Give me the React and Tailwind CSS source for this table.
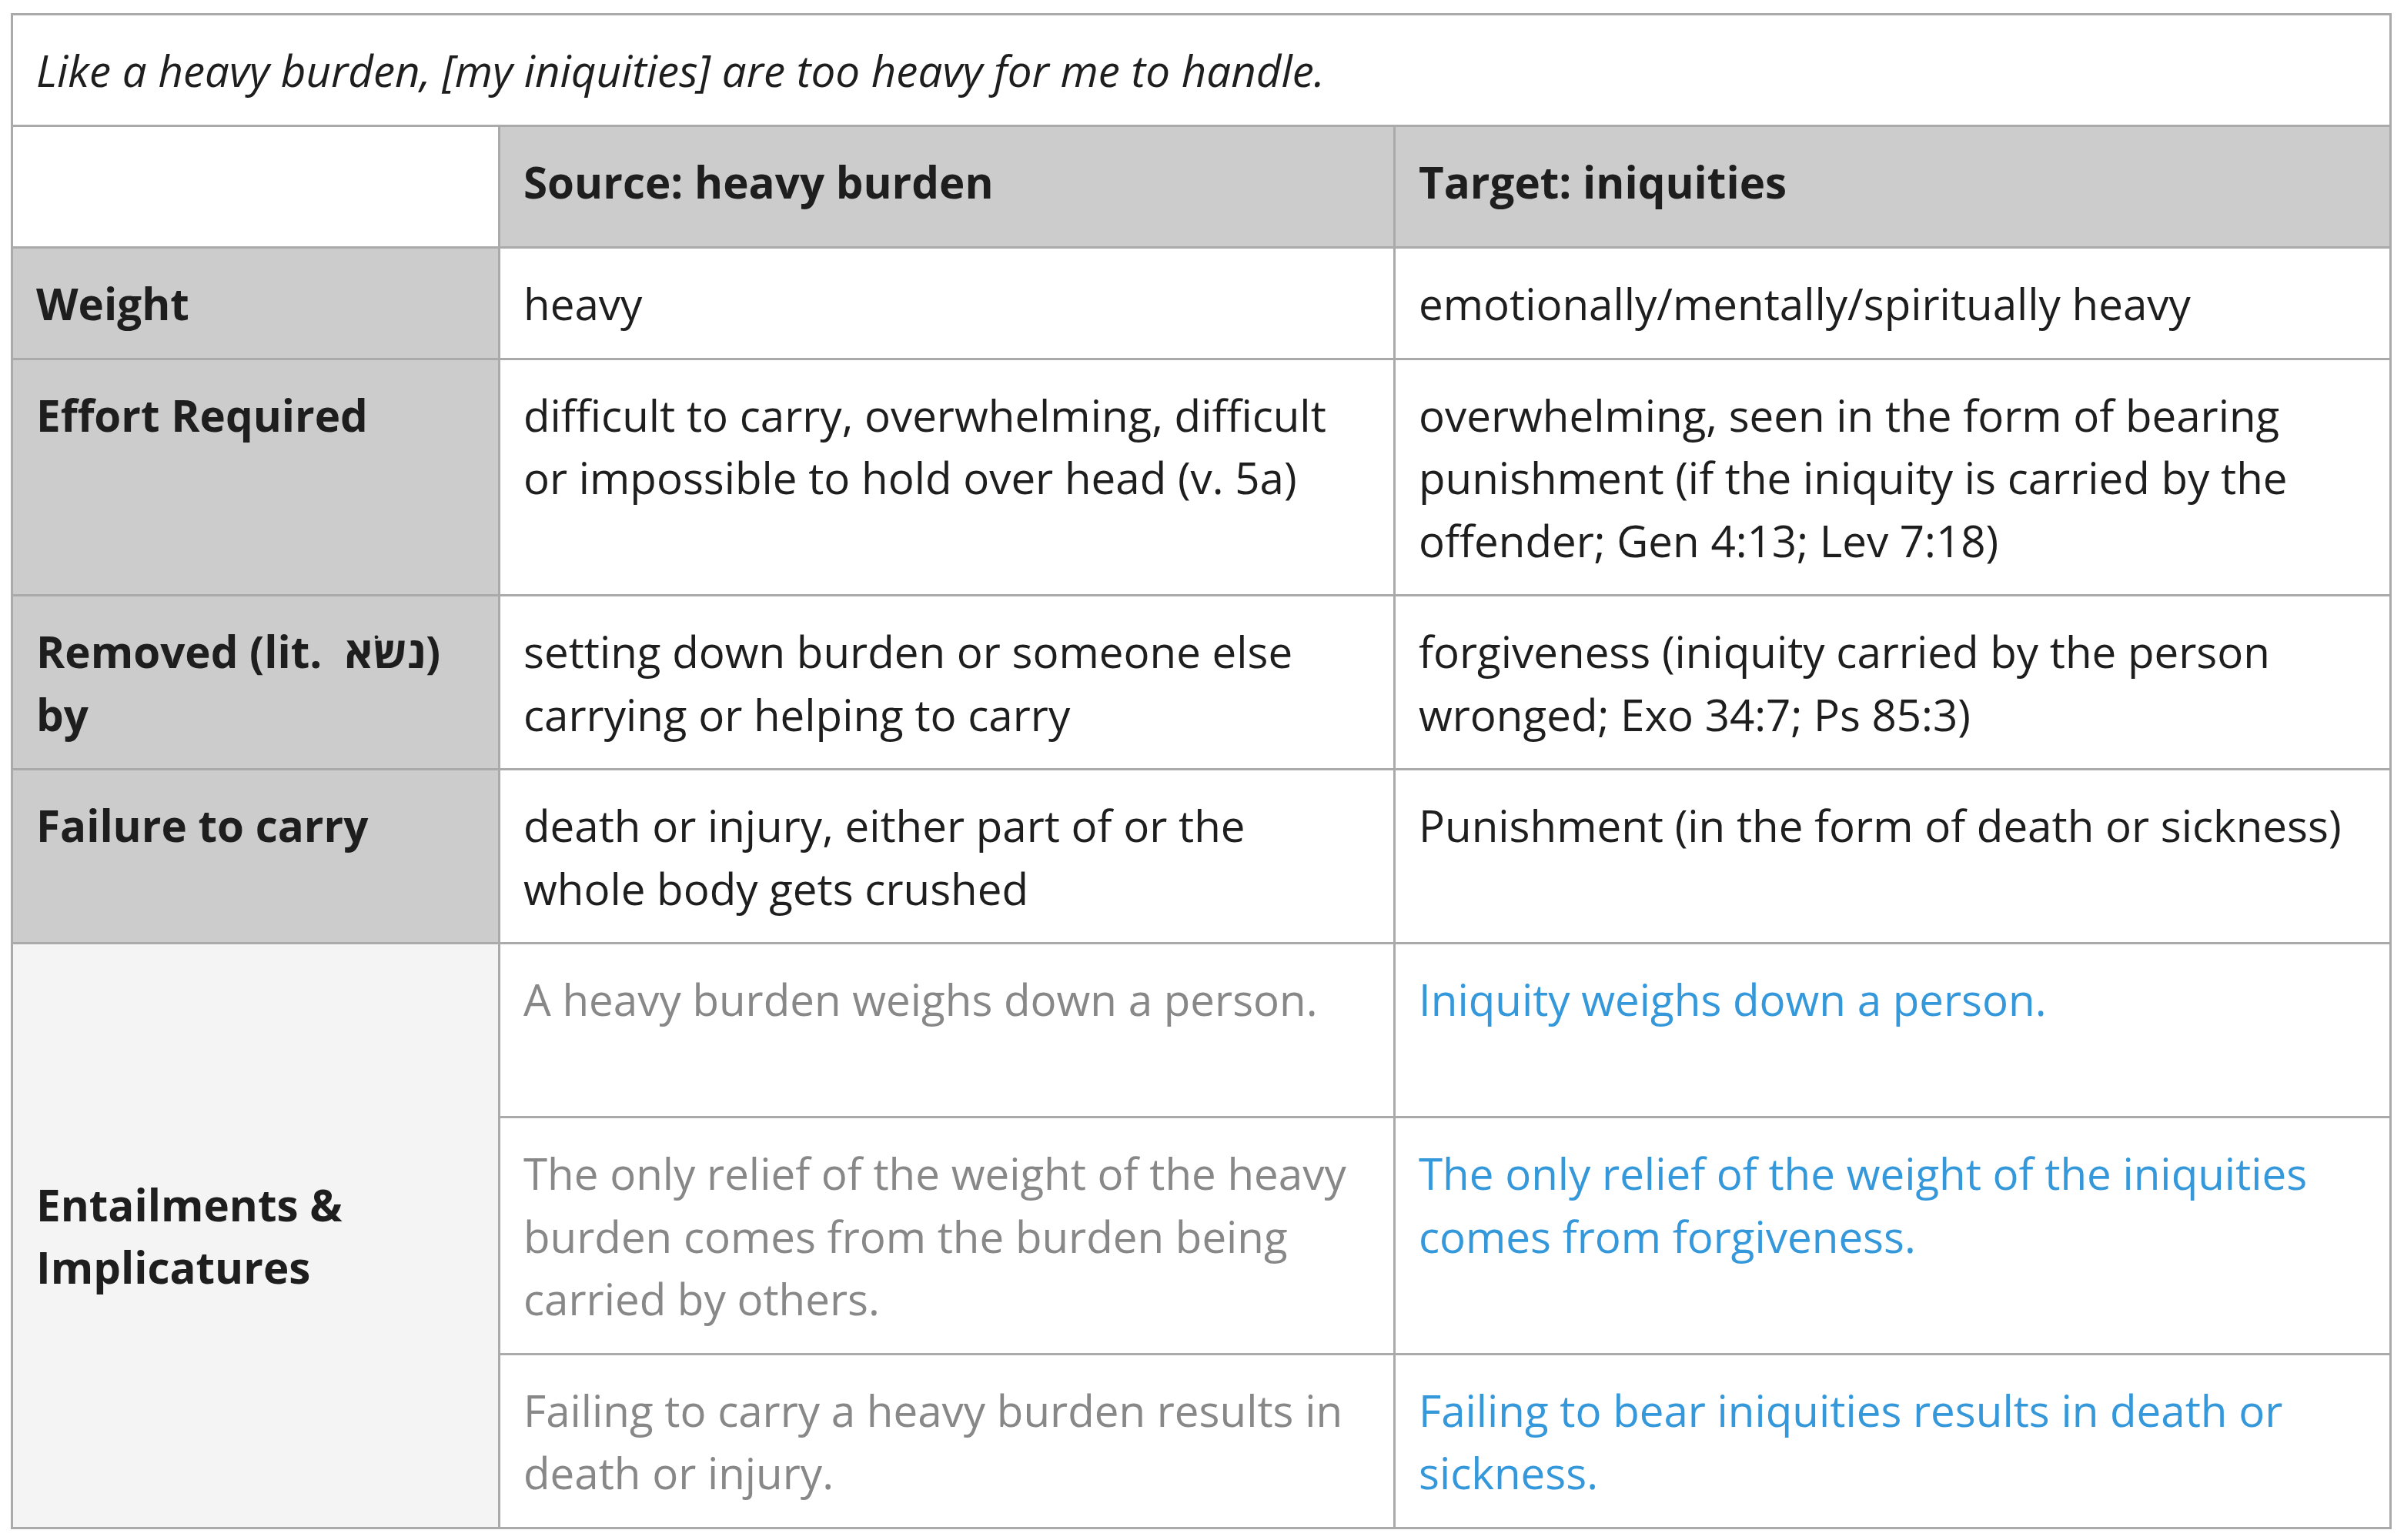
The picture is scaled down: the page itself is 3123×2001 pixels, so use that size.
import React from "react";

const cell = "border-r-[3px] border-b-[3px] border-[#aaaaaa] px-[30px] pt-[31px] pb-[29px]";
const label = `${cell} bg-[#cccccc] font-bold text-[#1e1e1e]`;
const body = `${cell} bg-white text-[#1e1e1e]`;
const gray = `${cell} bg-white text-[#888888]`;
const blue = `${cell} bg-white text-[#3498db]`;
const head = "border-r-[3px] border-b-[3px] border-[#aaaaaa] px-[30px] pt-[31px] pb-[43px]";

export default function App() {
  return (
    <div className="w-[3123px] h-[2001px] bg-white pt-[17px] pl-[14px]" style={{ fontFamily: '"Open Sans", "Noto Sans", "DejaVu Sans", sans-serif' }}>
      <div className="grid grid-cols-[633px_1163px_1294px] w-[3093px] border-l-[3px] border-t-[3px] border-[#aaaaaa] text-[56.5px] leading-[81.5px]">
        <div className={`${body} col-span-3 italic`}>
          Like a heavy burden, [my iniquities] are too heavy for me to handle.
        </div>

        <div className={`${head} bg-white`}></div>
        <div className={`${head} bg-[#cccccc] font-bold text-[#1e1e1e]`}>Source: heavy burden</div>
        <div className={`${head} bg-[#cccccc] font-bold text-[#1e1e1e]`}>Target: iniquities</div>

        <div className={label}>Weight</div>
        <div className={body}>heavy</div>
        <div className={body}>emotionally/mentally/spiritually heavy</div>

        <div className={label}>Effort Required</div>
        <div className={body}>difficult to carry, overwhelming, difficult or impossible to hold over head (v. 5a)</div>
        <div className={body}>overwhelming, seen in the form of bearing punishment (if the iniquity is carried by the offender; Gen 4:13; Lev 7:18)</div>

        <div className={label}>
          Removed (lit.&nbsp; <span dir="rtl">נשׂא</span>)<br />by
        </div>
        <div className={body}>setting down burden or someone else carrying or helping to carry</div>
        <div className={body}>forgiveness (iniquity carried by the person wronged; Exo 34:7; Ps 85:3)</div>

        <div className={label}>Failure to carry</div>
        <div className={body}>death or injury, either part of or the whole body gets crushed</div>
        <div className={body}>Punishment (in the form of death or sickness)</div>

        <div className={`${cell} row-span-3 bg-[#f4f4f4] font-bold text-[#1e1e1e] flex items-center`}>
          <div>Entailments &amp;<br />Implicatures</div>
        </div>
        <div className={`${gray} min-h-[226px]`}>A heavy burden weighs down a person.</div>
        <div className={`${blue} min-h-[226px]`}>Iniquity weighs down a person.</div>

        <div className={gray}>The only relief of the weight of the heavy burden comes from the burden being carried by others.</div>
        <div className={blue}>The only relief of the weight of the iniquities comes from forgiveness.</div>

        <div className={gray}>Failing to carry a heavy burden results in death or injury.</div>
        <div className={blue}>Failing to bear iniquities results in death or sickness.</div>
      </div>
    </div>
  );
}
